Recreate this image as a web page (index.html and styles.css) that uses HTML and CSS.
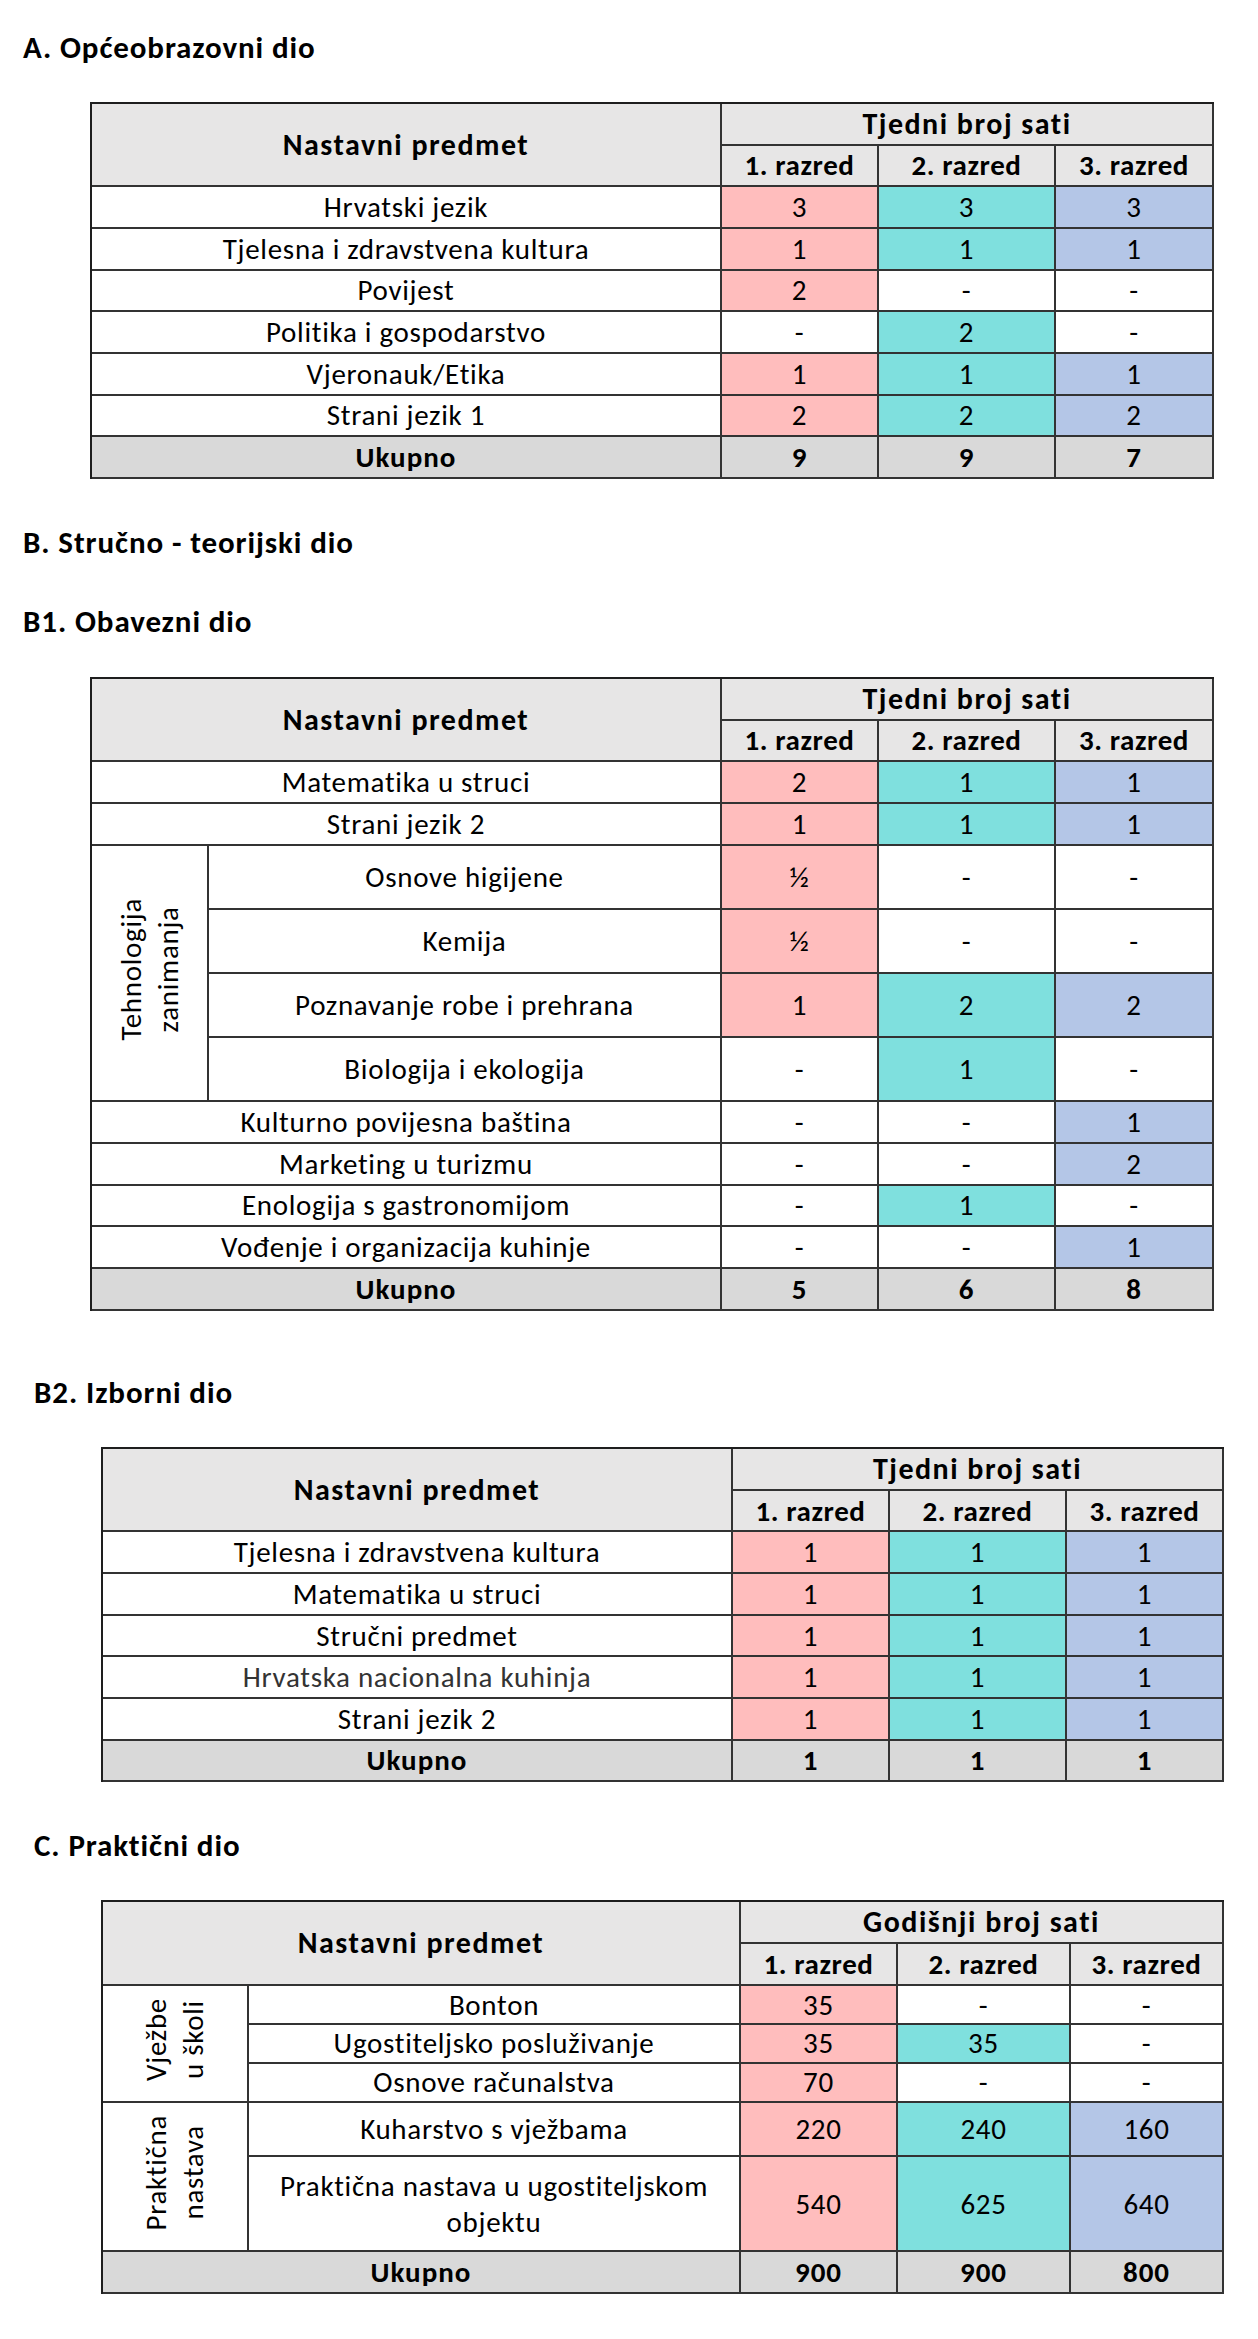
FILE: index.html
```html
<!DOCTYPE html>
<html lang="hr">
<head>
<meta charset="utf-8">
<title>Nastavni plan</title>
<link rel="stylesheet" href="styles.css">
</head>
<body>
<div class="doc">
  <h2 class="sec-title">A. Općeobrazovni dio</h2>
  <table class="sheet">
    <colgroup><col class="w-subj"><col class="w-c1"><col class="w-c2"><col class="w-c3"></colgroup>
    <tr class="r">
      <th class="hd big" rowspan="2">Nastavni predmet</th>
      <th class="hd big" colspan="3">Tjedni broj sati</th>
    </tr>
    <tr class="r">
      <th class="hd">1. razred</th><th class="hd">2. razred</th><th class="hd">3. razred</th>
    </tr>
    <tr class="r"><td>Hrvatski jezik</td><td class="p">3</td><td class="t">3</td><td class="b">3</td></tr>
    <tr class="r"><td>Tjelesna i zdravstvena kultura</td><td class="p">1</td><td class="t">1</td><td class="b">1</td></tr>
    <tr class="r"><td>Povijest</td><td class="p">2</td><td>-</td><td>-</td></tr>
    <tr class="r"><td>Politika i gospodarstvo</td><td>-</td><td class="t">2</td><td>-</td></tr>
    <tr class="r"><td>Vjeronauk/Etika</td><td class="p">1</td><td class="t">1</td><td class="b">1</td></tr>
    <tr class="r"><td>Strani jezik 1</td><td class="p">2</td><td class="t">2</td><td class="b">2</td></tr>
    <tr class="r tot"><td>Ukupno</td><td>9</td><td>9</td><td>7</td></tr>
  </table>

  <h2 class="sec-title sec-b">B. Stručno - teorijski dio</h2>
  <h2 class="sec-title sec-b1">B1. Obavezni dio</h2>
  <table class="sheet">
    <colgroup><col class="w-grp"><col class="w-sub2"><col class="w-c1"><col class="w-c2"><col class="w-c3"></colgroup>
    <tr class="r">
      <th class="hd big" rowspan="2" colspan="2">Nastavni predmet</th>
      <th class="hd big" colspan="3">Tjedni broj sati</th>
    </tr>
    <tr class="r">
      <th class="hd">1. razred</th><th class="hd">2. razred</th><th class="hd">3. razred</th>
    </tr>
    <tr class="r"><td colspan="2">Matematika u struci</td><td class="p">2</td><td class="t">1</td><td class="b">1</td></tr>
    <tr class="r"><td colspan="2">Strani jezik 2</td><td class="p">1</td><td class="t">1</td><td class="b">1</td></tr>
    <tr class="rt">
      <td rowspan="4" class="grp"><div class="vtext">Tehnologija<br>zanimanja</div></td>
      <td>Osnove higijene</td><td class="p">½</td><td>-</td><td>-</td>
    </tr>
    <tr class="rt"><td>Kemija</td><td class="p">½</td><td>-</td><td>-</td></tr>
    <tr class="rt"><td>Poznavanje robe i prehrana</td><td class="p">1</td><td class="t">2</td><td class="b">2</td></tr>
    <tr class="rt"><td>Biologija i ekologija</td><td>-</td><td class="t">1</td><td>-</td></tr>
    <tr class="r"><td colspan="2">Kulturno povijesna baština</td><td>-</td><td>-</td><td class="b">1</td></tr>
    <tr class="r"><td colspan="2">Marketing u turizmu</td><td>-</td><td>-</td><td class="b">2</td></tr>
    <tr class="r"><td colspan="2">Enologija s gastronomijom</td><td>-</td><td class="t">1</td><td>-</td></tr>
    <tr class="r"><td colspan="2">Vođenje i organizacija kuhinje</td><td>-</td><td>-</td><td class="b">1</td></tr>
    <tr class="r tot"><td colspan="2">Ukupno</td><td>5</td><td>6</td><td>8</td></tr>
  </table>

  <h2 class="sec-title sec-b2 indent">B2. Izborni dio</h2>
  <table class="sheet indent">
    <colgroup><col class="w-subj"><col class="w-c1"><col class="w-c2"><col class="w-c3b"></colgroup>
    <tr class="r">
      <th class="hd big" rowspan="2">Nastavni predmet</th>
      <th class="hd big" colspan="3">Tjedni broj sati</th>
    </tr>
    <tr class="r">
      <th class="hd">1. razred</th><th class="hd">2. razred</th><th class="hd">3. razred</th>
    </tr>
    <tr class="r"><td>Tjelesna i zdravstvena kultura</td><td class="p">1</td><td class="t">1</td><td class="b">1</td></tr>
    <tr class="r"><td>Matematika u struci</td><td class="p">1</td><td class="t">1</td><td class="b">1</td></tr>
    <tr class="r"><td>Stručni predmet</td><td class="p">1</td><td class="t">1</td><td class="b">1</td></tr>
    <tr class="r"><td class="soft">Hrvatska nacionalna kuhinja</td><td class="p">1</td><td class="t">1</td><td class="b">1</td></tr>
    <tr class="r"><td>Strani jezik 2</td><td class="p">1</td><td class="t">1</td><td class="b">1</td></tr>
    <tr class="r tot"><td>Ukupno</td><td>1</td><td>1</td><td>1</td></tr>
  </table>

  <h2 class="sec-title sec-c indent">C. Praktični dio</h2>
  <table class="sheet indent">
    <colgroup><col class="w-grpc"><col class="w-subc"><col class="w-c1"><col class="w-c2c"><col class="w-c3c"></colgroup>
    <tr class="rc1">
      <th class="hd big" rowspan="2" colspan="2">Nastavni predmet</th>
      <th class="hd big" colspan="3">Godišnji broj sati</th>
    </tr>
    <tr class="rc2">
      <th class="hd">1. razred</th><th class="hd">2. razred</th><th class="hd">3. razred</th>
    </tr>
    <tr class="rv">
      <td rowspan="3" class="grp"><div class="vtext">Vježbe<br>u školi</div></td>
      <td>Bonton</td><td class="p">35</td><td>-</td><td>-</td>
    </tr>
    <tr class="rv"><td>Ugostiteljsko posluživanje</td><td class="p">35</td><td class="t">35</td><td>-</td></tr>
    <tr class="rv"><td>Osnove računalstva</td><td class="p">70</td><td>-</td><td>-</td></tr>
    <tr class="rk">
      <td rowspan="2" class="grp"><div class="vtext">Praktična<br>nastava</div></td>
      <td>Kuharstvo s vježbama</td><td class="p">220</td><td class="t">240</td><td class="b">160</td>
    </tr>
    <tr class="rp"><td>Praktična nastava u ugostiteljskom<br>objektu</td><td class="p">540</td><td class="t">625</td><td class="b">640</td></tr>
    <tr class="r tot"><td colspan="2">Ukupno</td><td>900</td><td>900</td><td>800</td></tr>
  </table>
</div>
</body>
</html>
```

FILE: styles.css
```css
body {
  margin: 0;
  background: #ffffff;
  color: #000000;
  font-family: Carlito, Calibri, Lato, sans-serif;
}

.doc {
  padding: 29.5px 0 40px;
}

.sec-title {
  margin: 0;
  padding-left: 23px;
  font-size: 31px;
  font-weight: bold;
  line-height: 34px;
  letter-spacing: 0.9px;
}

.sec-title.indent {
  padding-left: 34px;
}

.sec-b { margin-top: 46.5px; }
.sec-b1 { margin-top: 45px; }
.sec-b2 { margin-top: 64px; }
.sec-c { margin-top: 45.5px; }

.sheet {
  margin-top: 38.5px;
  margin-left: 90px;
  border-collapse: separate;
  border-spacing: 0;
  table-layout: fixed;
  border-top: 2px solid #1e1e1e;
  border-left: 2px solid #1e1e1e;
}

.sheet.indent {
  margin-left: 101px;
}

.sheet td,
.sheet th {
  padding: 0;
  border-right: 2px solid #333333;
  border-bottom: 2px solid #333333;
  text-align: center;
  vertical-align: middle;
  font-size: 29px;
  font-weight: normal;
  letter-spacing: 0.7px;
  line-height: 36px;
  white-space: nowrap;
  overflow: hidden;
}

.sheet th.hd {
  background: #e7e6e6;
  font-weight: bold;
  letter-spacing: 0.6px;
}

.sheet th.big {
  font-size: 30px;
  letter-spacing: 1.5px;
}

.w-subj { width: 630px; }
.w-grp { width: 117px; }
.w-sub2 { width: 513px; }
.w-c1 { width: 157px; }
.w-c2 { width: 177px; }
.w-c3 { width: 158px; }
.w-c3b { width: 157px; }
.w-grpc { width: 146px; }
.w-subc { width: 492px; }
.w-c2c { width: 173px; }
.w-c3c { width: 153px; }

.r { height: 41.67px; }
.rt { height: 64.2px; }
.rc1 { height: 41.7px; }
.rc2 { height: 42.3px; }
.rv { height: 38.8px; }
.rk { height: 54.6px; }
.rp { height: 94.9px; }

.p { background: #ffbdbd; }
.t { background: #7fe0de; }
.b { background: #b4c6e7; }

.sheet .tot td {
  background: #d9d9d9;
  font-weight: bold;
  letter-spacing: 1px;
}

.soft {
  color: #333333;
}

.grp {
  background: #ffffff;
}

.vtext {
  display: inline-block;
  writing-mode: vertical-rl;
  transform: rotate(180deg);
  line-height: 37px;
  text-align: center;
}
```
